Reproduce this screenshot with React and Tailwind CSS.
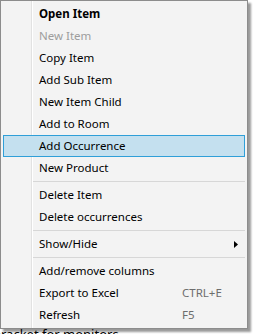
import React from 'react';

const items = [
  { label: 'Open Item', bold: true },
  { label: 'New Item', disabled: true },
  { label: 'Copy Item' },
  { label: 'Add Sub Item' },
  { label: 'New Item Child' },
  { label: 'Add to Room' },
  { label: 'Add Occurrence', active: true },
  { label: 'New Product' },
  { sep: true },
  { label: 'Delete Item' },
  { label: 'Delete occurrences' },
  { sep: true },
  { label: 'Show/Hide', sub: true },
  { sep: true },
  { label: 'Add/remove columns' },
  { label: 'Export to Excel', shortcut: 'CTRL+E' },
  { label: 'Refresh', shortcut: 'F5' },
];

function MenuRow({ item }) {
  if (item.sep) {
    return (
      <div className="h-[5px] flex items-center pl-[30px]">
        <div className="h-px w-full bg-[#d7d7d7]" />
      </div>
    );
  }
  return (
    <div
      className={`relative h-[22px] flex items-center pl-[35px] border ${
        item.active ? 'bg-[#c4e0ef] border-[#2f9fd8]' : 'border-transparent'
      }`}
    >
      <span
        className={`w-[143px] whitespace-nowrap ${item.bold ? 'font-bold' : ''} ${
          item.disabled ? 'text-[#9d9d9d]' : 'text-black'
        }`}
      >
        {item.label}
      </span>
      {item.shortcut && <span className="text-[#6d6d6d]">{item.shortcut}</span>}
      {item.sub && (
        <svg className="ml-auto mr-[6px]" width="4" height="7" viewBox="0 0 4 7">
          <path d="M0 0 L4 3.5 L0 7 Z" fill="#000" />
        </svg>
      )}
    </div>
  );
}

export default function App() {
  return (
    <div className="relative w-[253px] h-[334px] bg-white overflow-hidden font-['Noto_Sans',sans-serif] text-[11.5px]">
      {/** PAGE BEHIND */}
      <div className="pt-[326px] -ml-[7px] text-[13px] leading-[16px] text-black whitespace-nowrap">
        bracket for monitors
      </div>

      {/** CONTEXT MENU */}
      <div className="absolute top-0 left-0 w-[248px] bg-[#f3f3f3] border border-[#8c8c8c] px-[2px] pt-[2px] pb-[2px] shadow-[3px_3px_2px_rgba(0,0,0,0.4)]">
        <div className="absolute top-0 bottom-0 left-[30px] w-px bg-[#e2e2e2]" />
        <div className="absolute top-0 bottom-0 left-[31px] w-px bg-white" />
        <div className="relative flex flex-col">
          {items.map((item, i) => (
            <MenuRow key={i} item={item} />
          ))}
        </div>
      </div>
    </div>
  );
}
